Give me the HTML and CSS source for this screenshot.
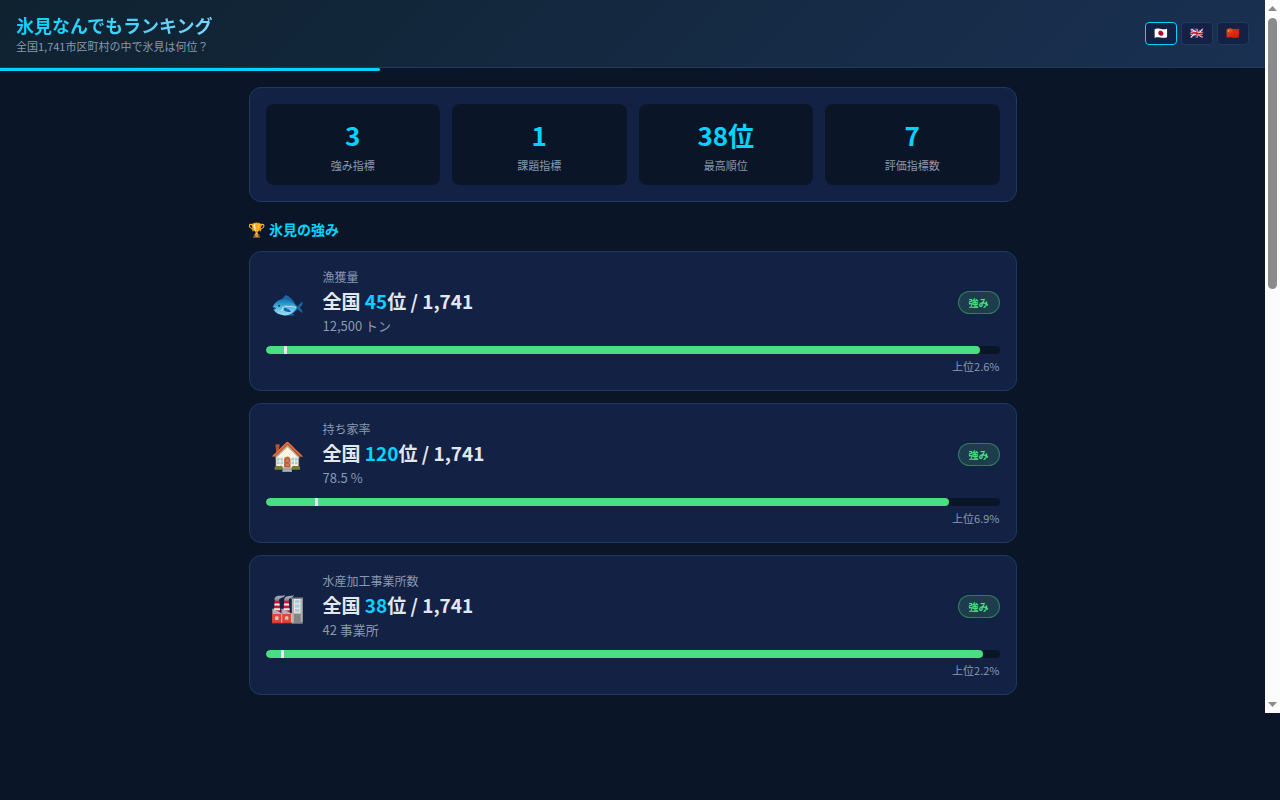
FILE: index.html
```html
<!DOCTYPE html>
<html lang="ja">
<head>
    <meta charset="UTF-8">
    <meta name="viewport" content="width=device-width, initial-scale=1.0">
    <title>氷見なんでもランキング</title>
    <link rel="stylesheet" href="styles.css">
</head>
<body>
    <div class="page">
        <!-- ヘッダー -->
        <header class="header">
            <div class="header-text">
                <h1>氷見なんでもランキング</h1>
                <p class="subtitle">全国1,741市区町村の中で氷見は何位？</p>
            </div>
            <div class="lang-switch">
                <button type="button" class="lang-btn active" aria-label="日本語">🇯🇵</button>
                <button type="button" class="lang-btn" aria-label="English">🇬🇧</button>
                <button type="button" class="lang-btn" aria-label="中文">🇨🇳</button>
            </div>
        </header>
        <div class="scroll-progress"><div class="scroll-progress-fill" style="width: 30%"></div></div>

        <main class="container">
            <!-- サマリー -->
            <section class="summary">
                <div class="stat">
                    <div class="stat-value">3</div>
                    <div class="stat-label">強み指標</div>
                </div>
                <div class="stat">
                    <div class="stat-value">1</div>
                    <div class="stat-label">課題指標</div>
                </div>
                <div class="stat">
                    <div class="stat-value">38位</div>
                    <div class="stat-label">最高順位</div>
                </div>
                <div class="stat">
                    <div class="stat-value">7</div>
                    <div class="stat-label">評価指標数</div>
                </div>
            </section>

            <!-- 強み一覧 -->
            <h2 class="section-title">🏆 氷見の強み</h2>
            <div class="rank-list">
                <article class="rank-card">
                    <div class="rank-head">
                        <div class="rank-icon">🐟</div>
                        <div class="rank-info">
                            <div class="rank-name">漁獲量</div>
                            <div class="rank-position">全国 <span>45</span>位 / 1,741</div>
                            <div class="rank-value">12,500 トン</div>
                        </div>
                        <span class="badge">強み</span>
                    </div>
                    <div class="bar">
                        <div class="bar-fill" style="width: 97.4%"></div>
                        <div class="bar-marker" style="left: 2.6%"></div>
                    </div>
                    <div class="percentile">上位2.6%</div>
                </article>

                <article class="rank-card">
                    <div class="rank-head">
                        <div class="rank-icon">🏠</div>
                        <div class="rank-info">
                            <div class="rank-name">持ち家率</div>
                            <div class="rank-position">全国 <span>120</span>位 / 1,741</div>
                            <div class="rank-value">78.5 %</div>
                        </div>
                        <span class="badge">強み</span>
                    </div>
                    <div class="bar">
                        <div class="bar-fill" style="width: 93.1%"></div>
                        <div class="bar-marker" style="left: 6.9%"></div>
                    </div>
                    <div class="percentile">上位6.9%</div>
                </article>

                <article class="rank-card">
                    <div class="rank-head">
                        <div class="rank-icon">🏭</div>
                        <div class="rank-info">
                            <div class="rank-name">水産加工事業所数</div>
                            <div class="rank-position">全国 <span>38</span>位 / 1,741</div>
                            <div class="rank-value">42 事業所</div>
                        </div>
                        <span class="badge">強み</span>
                    </div>
                    <div class="bar">
                        <div class="bar-fill" style="width: 97.8%"></div>
                        <div class="bar-marker" style="left: 2.2%"></div>
                    </div>
                    <div class="percentile">上位2.2%</div>
                </article>
            </div>
        </main>
    </div>

    <!-- スクロールバー -->
    <div class="scrollbar" aria-hidden="true">
        <svg width="9" height="5" viewBox="0 0 9 5"><path d="M4.5 0L9 5H0z" fill="#8b8b8b"/></svg>
        <div class="scrollbar-track"><div class="scrollbar-thumb"></div></div>
        <svg width="9" height="5" viewBox="0 0 9 5"><path d="M0 0h9L4.5 5z" fill="#8b8b8b"/></svg>
    </div>
</body>
</html>
```
FILE: styles.css
```css
:root {
    --bg: #0a1628;
    --card: #132144;
    --border: #1e3a5f;
    --accent: #00d4ff;
    --text: #e2e8f0;
    --muted: #8899b0;
    --good: #4ade80;
}

* {
    box-sizing: border-box;
    margin: 0;
    padding: 0;
}

body {
    font-family: "Noto Sans CJK JP", "Noto Color Emoji", sans-serif;
    background: var(--bg);
    color: var(--text);
    line-height: 1.5;
    display: flex;
    align-items: flex-start;
    min-height: 100vh;
}

.page {
    flex: 1;
    min-width: 0;
}

/* ヘッダー */
.header {
    display: flex;
    justify-content: space-between;
    align-items: center;
    padding: 12px 16px;
    background: linear-gradient(135deg, #0f2230, #1a3052);
    border-bottom: 1px solid var(--border);
}

.header h1 {
    width: fit-content;
    font-size: 18px;
    line-height: 26px;
    background: linear-gradient(90deg, var(--accent), #7dd3fc);
    -webkit-background-clip: text;
    background-clip: text;
    color: transparent;
}

.subtitle {
    font-size: 11px;
    line-height: 17px;
    color: var(--muted);
}

.lang-switch {
    display: flex;
    gap: 4px;
}

.lang-btn {
    width: 32px;
    height: 23px;
    padding-bottom: 3px;
    font-family: inherit;
    font-size: 11px;
    line-height: 16px;
    background: var(--card);
    border: 1px solid var(--border);
    border-radius: 4px;
    cursor: pointer;
}

.lang-btn.active {
    border-color: var(--accent);
}

.scroll-progress {
    height: 3px;
}

.scroll-progress-fill {
    height: 100%;
    background: var(--accent);
    border-radius: 0 2px 2px 0;
}

.container {
    max-width: 800px;
    margin: 0 auto;
    padding: 16px;
}

/* サマリー */
.summary {
    display: grid;
    grid-template-columns: repeat(4, 1fr);
    gap: 12px;
    padding: 16px;
    margin-bottom: 16px;
    background: var(--card);
    border: 1px solid var(--border);
    border-radius: 12px;
}

.stat {
    padding: 12px;
    text-align: center;
    background: var(--bg);
    border-radius: 8px;
}

.stat-value {
    font-size: 26px;
    font-weight: bold;
    line-height: 37px;
    color: var(--accent);
}

.stat-label {
    margin-top: 4px;
    font-size: 11px;
    line-height: 16px;
    color: var(--muted);
}

.section-title {
    margin-bottom: 10px;
    font-size: 14px;
    line-height: 23px;
    color: var(--accent);
}

/* ランキングカード */
.rank-list {
    display: flex;
    flex-direction: column;
    gap: 12px;
}

.rank-card {
    padding: 16px;
    background: var(--card);
    border: 1px solid var(--border);
    border-radius: 12px;
}

.rank-head {
    display: flex;
    align-items: center;
    gap: 12px;
    margin-bottom: 10px;
}

.rank-icon {
    width: 45px;
    font-size: 28px;
    line-height: 42px;
    text-align: center;
}

.rank-info {
    flex: 1;
}

.rank-name {
    font-size: 12px;
    line-height: 18px;
    color: var(--muted);
}

.rank-position {
    font-size: 19px;
    font-weight: bold;
    line-height: 30px;
}

.rank-position span {
    color: var(--accent);
}

.rank-value {
    font-size: 13px;
    line-height: 20px;
    color: var(--muted);
}

.badge {
    padding: 3px 10px;
    font-size: 10px;
    font-weight: bold;
    line-height: 15px;
    color: var(--good);
    background: rgba(74, 222, 128, 0.15);
    border: 1px solid rgba(74, 222, 128, 0.4);
    border-radius: 12px;
}

.bar {
    position: relative;
    height: 8px;
    background: var(--bg);
    border-radius: 4px;
    overflow: hidden;
}

.bar-fill {
    height: 100%;
    background: var(--good);
    border-radius: 4px;
}

.bar-marker {
    position: absolute;
    top: 0;
    width: 3px;
    height: 100%;
    margin-left: -1px;
    background: var(--text);
}

.percentile {
    margin-top: 4px;
    font-size: 11px;
    line-height: 16px;
    text-align: right;
    color: var(--muted);
}

/* スクロールバー */
.scrollbar {
    display: flex;
    flex-direction: column;
    align-items: center;
    gap: 7px;
    width: 15px;
    height: calc(100vh - 87px);
    padding: 6px 0;
    background: #fcfcfc;
}

.scrollbar-track {
    flex: 1;
    width: 9px;
}

.scrollbar-thumb {
    height: 40%;
    background: #8b8b8b;
    border-radius: 5px;
}
```
